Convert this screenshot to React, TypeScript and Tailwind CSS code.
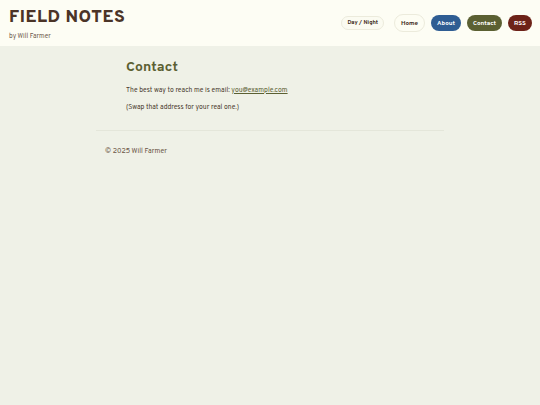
const navLinks = [
  { label: "Home", className: "border border-[#ecebdc] bg-[#fdfdf3] text-[#3d2b20]" },
  { label: "About", className: "bg-[#2f5d93] text-white" },
  { label: "Contact", className: "bg-[#5b6032] text-white" },
  { label: "RSS", className: "bg-[#6d2218] text-white" },
];

export default function App() {
  return (
    <div
      className="min-h-screen bg-[#eff1e7] text-[#4a3a2e]"
      style={{ fontFamily: '"Overpass", "Lato", "Noto Sans", sans-serif' }}
    >
      <header className="flex h-[46px] items-center justify-between bg-[#fdfdf4] pl-[9px] pr-[8px]">
        <div className="flex flex-col pt-[5px]">
          <h1 className="text-[17.5px] font-extrabold leading-none tracking-[0.03em] text-[#4b3427]">
            FIELD NOTES
          </h1>
          <p className="mt-[7px] text-[6.6px] leading-none text-[#6e5a4c]">by Will Farmer</p>
        </div>
        <nav className="flex items-center gap-[6px]">
          <button className="mr-[4px] rounded-full border border-[#ecebdc] bg-[#fbfbf1] px-[5px] py-[3px] text-[5.7px] font-bold leading-none text-[#3d2b20]">
            Day / Night
          </button>
          {navLinks.map((link) => (
            <a
              key={link.label}
              className={`rounded-full px-[6px] py-[5px] text-[6.3px] font-bold leading-none ${link.className}`}
            >
              {link.label}
            </a>
          ))}
        </nav>
      </header>

      <main className="mx-auto w-[348px]">
        <article className="px-[30px] pt-[13px]">
          <h2 className="text-[14px] font-bold leading-tight tracking-[0.01em] text-[#5b6032]">Contact</h2>
          <p className="mt-[10px] text-[6.8px] leading-tight text-[#4a3a2e]">
            The best way to reach me is email:{" "}
            <a className="text-[#5b6032] underline">you@example.com</a>
          </p>
          <p className="mt-[9px] text-[6.8px] leading-tight text-[#4a3a2e]">
            (Swap that address for your real one.)
          </p>
        </article>
        <hr className="mt-[18px] border-[#e4e6da]" />
        <footer className="px-[9px] pt-[16px] text-[7px] text-[#6b5545]">© 2025 Will Farmer</footer>
      </main>
    </div>
  );
}
